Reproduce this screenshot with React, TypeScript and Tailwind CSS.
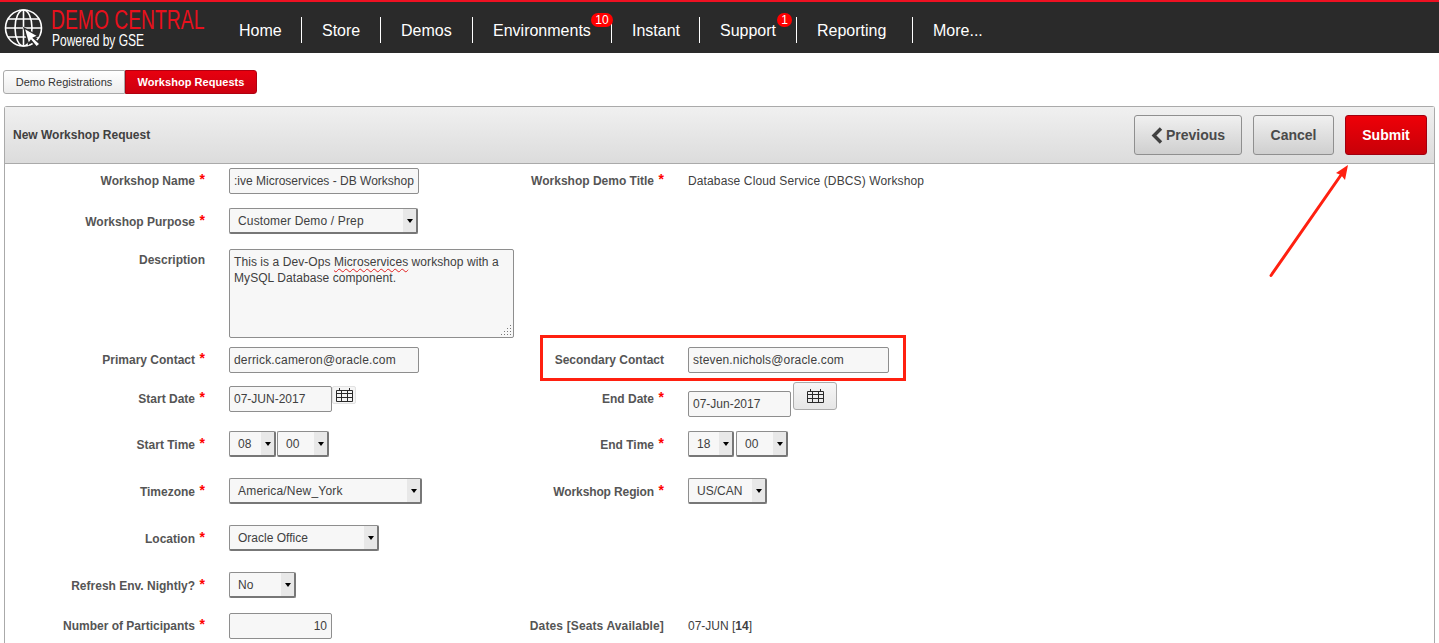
const navItems = [
  { label: "Home", width: "w-[63px]" },
  { label: "Store", width: "w-[79px]" },
  { label: "Demos", width: "w-[92px]" },
  { label: "Environments", width: "w-[139px]", badge: "10", badgePos: "right-[-2px] w-[22px]" },
  { label: "Instant", width: "w-[88px]" },
  { label: "Support", width: "w-[97px]", badge: "1", badgePos: "right-[4px] w-[15px]" },
  { label: "Reporting", width: "w-[116px]" },
  { label: "More...", width: "w-auto" },
];

function Logo() {
  return (
    <svg width="46" height="46" viewBox="0 0 46 46" fill="none" stroke="#fff" strokeWidth="1.6" className="shrink-0">
      <circle cx="21.5" cy="20" r="18" />
      <ellipse cx="21.5" cy="20" rx="8.5" ry="18" />
      <path d="M21.5 2v36M6 11h31M3.5 20h36M6 29h31" />
      <path d="M22 20 L36 28 L31.5 30 L38 36 L34.5 39 L29 32.5 L26.5 36 Z" fill="#fff" stroke="#2a2a2a" strokeWidth="1.4" />
    </svg>
  );
}

function Label({ text, required, pad = "pt-[6px]", width = "w-[200px]", extra = "" }: { text: string; required?: boolean; pad?: string; width?: string; extra?: string }) {
  return (
    <div className={`${width} ${pad} shrink-0 flex justify-end whitespace-nowrap text-[12px] font-bold leading-[14px] text-[#555]`}>
      <span className={extra}>{text}</span>
      {required ? <span className="w-[10px] -mt-[2px] text-right text-[14px] leading-[14px] text-[#f00]">*</span> : null}
    </div>
  );
}

function TextBox({ value, width, extra = "" }: { value: string; width: string; extra?: string }) {
  return (
    <div
      className={`${width} ${extra} h-[26px] shrink-0 overflow-hidden whitespace-nowrap rounded-[2px] border border-[#8e8e8e] bg-[#f7f7f7] px-[4px] text-[12px] leading-[24px] text-[#404040]`}
    >
      {value}
    </div>
  );
}

function Select({ value, width, extra = "" }: { value: string; width: string; extra?: string }) {
  return (
    <div className={`${width} h-[26px] shrink-0 flex rounded-[2px] border border-[#8e8e8e] border-r-2 border-b-2 border-r-[#777] border-b-[#777] bg-[#f7f7f7] text-[12px] leading-[25px] text-[#404040]`}>
      <span className={`${extra} flex-1 overflow-hidden whitespace-nowrap pl-[8px]`}>{value}</span>
      <span className="flex w-[13px] shrink-0 items-center justify-center bg-[#e8e8e8]">
        <span className="border-x-[3.5px] border-t-[4px] border-x-transparent border-t-black" />
      </span>
    </div>
  );
}

function CalendarIcon() {
  return (
    <svg width="17" height="14" viewBox="0 0 17 14" fill="none" stroke="#2a2a2a" strokeWidth="1">
      <path d="M.5 2.5h16v11H.5zM.5 5.5h16M.5 9.5h16M5.5 2.5v11M11.5 2.5v11" />
      <path d="M3.5 0v2.5M13.5 0v2.5" />
    </svg>
  );
}

// one form line: left label + field, optional right label + field
function Row({ className, left, right }: { className: string; left: React.ReactNode; right?: React.ReactNode }) {
  return (
    <div className={`${className} flex items-start`}>
      <div className="flex w-[526px] shrink-0 items-start">{left}</div>
      {right ? <div className="flex items-start">{right}</div> : null}
    </div>
  );
}

const leftGap = <div className="w-[24px] shrink-0" />;
const rightLabelWidth = "w-[133px]";

export default function App() {
  return (
    <div className="relative h-[643px] w-[1439px] overflow-hidden bg-white font-['Liberation_Sans',Arial,sans-serif]">
      {/* top bar */}
      <header className="flex h-[53px] border-t-2 border-[#ee1122] bg-[#2a2a2a]">
        <div className="flex w-[239px] shrink-0 items-start pl-[2px] pt-[6px]">
          <Logo />
          <div className="ml-[3px] font-['Liberation_Sans_Narrow','Liberation_Sans',sans-serif]">
            <div className="origin-left scale-x-[0.715] whitespace-nowrap text-[27px] leading-[24px] text-[#e8101c]">DEMO CENTRAL</div>
            <div className="ml-[1px] origin-left scale-x-[0.75] whitespace-nowrap text-[16px] leading-[17px] text-white">Powered by GSE</div>
          </div>
        </div>
        <nav className="flex items-start pt-[15px]">
          {navItems.map((item, i) => (
            <div
              key={item.label}
              className={`${item.width} ${i < 7 ? "border-r border-white" : ""} ${i > 0 ? "pl-[20px]" : ""} relative h-[26px] shrink-0 text-[16px] leading-[28px] text-white`}
            >
              {item.label}
              {item.badge ? (
                <span className={`${item.badgePos} absolute top-[-4px] rounded-[7px] bg-[#f00] text-center text-[12px] leading-[14px] text-white`}>
                  {item.badge}
                </span>
              ) : null}
            </div>
          ))}
        </nav>
      </header>

      {/* tabs */}
      <div className="flex pl-[3px] pt-[17px] text-[11px] leading-[22px]">
        <div className="h-[24px] w-[122px] rounded-l-[3px] border border-[#aaa] bg-linear-to-b from-white to-[#ececec] text-center text-[#333]">Demo Registrations</div>
        <div className="h-[24px] w-[132px] rounded-r-[3px] border border-[#b00010] bg-linear-to-b from-[#e8000f] to-[#cc0010] text-center font-bold tracking-[0.05px] text-white">Workshop Requests</div>
      </div>

      {/* region */}
      <section className="mx-[4px] mt-[12px] h-[537px] rounded-t-[3px] border border-b-0 border-[#aaa]">
        <div className="flex h-[57px] items-center border-b border-[#aaa] bg-linear-to-b from-[#f0f0f0] to-[#dcdcdc] pl-[8px] pr-[7px]">
          <h2 className="flex-1 pb-[1px] text-[12px] font-bold text-[#404040]">New Workshop Request</h2>
          <button className="mr-[11px] flex h-[40px] w-[108px] items-center justify-center rounded-[3px] border border-[#8f8f8f] bg-linear-to-b from-[#f0f0f0] to-[#cfcfcf] text-[14px] font-bold text-[#4a4a4a]">
            <svg width="12" height="17" viewBox="0 0 12 17" className="mr-[3px]" fill="none" stroke="#404040" strokeWidth="3.4">
              <path d="M10 1.5 3 8.5 10 15.5" />
            </svg>
            Previous
          </button>
          <button className="mr-[11px] h-[40px] w-[81px] rounded-[3px] border border-[#8f8f8f] bg-linear-to-b from-[#f0f0f0] to-[#cfcfcf] text-[14px] font-bold text-[#4a4a4a]">Cancel</button>
          <button className="h-[40px] w-[82px] rounded-[3px] border border-[#a00010] bg-linear-to-b from-[#ee0008] to-[#c80008] text-[14px] font-bold text-white">Submit</button>
        </div>

        <div className="pt-[4px]">
          <Row
            className="h-[26px]"
            left={<><Label text="Workshop Name" required />{leftGap}<TextBox value=":ive Microservices - DB Workshop" width="w-[190px]" /></>}
            right={<><Label text="Workshop Demo Title" required width={rightLabelWidth} />{leftGap}<span className="text-[12px] leading-[26px] tracking-[0.13px] text-[#404040]">Database Cloud Service (DBCS) Workshop</span></>}
          />
          <Row
            className="mt-[14px] h-[26px]"
            left={<><Label text="Workshop Purpose" required pad="pt-[7px]" />{leftGap}<Select value="Customer Demo / Prep" width="w-[189px]" extra="tracking-[0.15px]" /></>}
          />
          <Row
            className="mt-[15px] h-[89px]"
            left={
              <>
                <Label text="Description" pad="pt-[4px]" />
                {leftGap}
                <div className="relative h-[89px] w-[285px] shrink-0 rounded-[2px] border border-[#8e8e8e] bg-[#f7f7f7] px-[4px] pt-[4px] text-[12px] leading-[16px] tracking-[0.07px] text-[#404040]">
                  This is a Dev-Ops <span className="underline decoration-[#e02020] decoration-wavy decoration-1 underline-offset-2">Microservices</span> workshop with a MySQL Database component.
                  <svg width="11" height="11" viewBox="0 0 11 11" fill="#777" className="absolute bottom-[1px] right-[1px]">
                    <path d="M9 0h1v1H9zM6 3h1v1H6zM9 3h1v1H9zM3 6h1v1H3zM6 6h1v1H6zM9 6h1v1H9zM0 9h1v1H0zM3 9h1v1H3zM6 9h1v1H6zM9 9h1v1H9z" />
                  </svg>
                </div>
              </>
            }
          />
          <Row
            className="mt-[9px] h-[26px]"
            left={<><Label text="Primary Contact" required />{leftGap}<TextBox value="derrick.cameron@oracle.com" width="w-[190px]" extra="tracking-[0.19px]" /></>}
            right={<><Label text="Secondary Contact" width={rightLabelWidth} />{leftGap}<TextBox value="steven.nichols@oracle.com" width="w-[201px]" extra="tracking-[0.16px]" /></>}
          />
          <Row
            className="mt-[13px] h-[26px]"
            left={
              <>
                <Label text="Start Date" required />
                {leftGap}
                <TextBox value="07-JUN-2017" width="w-[103px]" />
                <div className="flex h-[18px] w-[24px] shrink-0 items-center justify-center rounded-[2px] border border-[#e2e2e2] bg-[#f5f5f5]">
                  <CalendarIcon />
                </div>
              </>
            }
            right={
              <>
                <Label text="End Date" required width={rightLabelWidth} />
                {leftGap}
                <TextBox value="07-Jun-2017" width="w-[103px]" extra="mt-[5px]" />
                <div className="-mt-[4px] ml-[2px] flex h-[28px] w-[44px] shrink-0 justify-center rounded-[3px] border border-[#aaa] bg-linear-to-b from-[#f6f6f6] to-[#e6e6e6] pt-[6px]">
                  <CalendarIcon />
                </div>
              </>
            }
          />
          <Row
            className="mt-[19px] h-[26px]"
            left={<><Label text="Start Time" required pad="pt-[7px]" />{leftGap}<Select value="08" width="w-[47px]" /><div className="w-[1px] shrink-0" /><Select value="00" width="w-[52px]" /></>}
            right={<><Label text="End Time" required pad="pt-[7px]" width={rightLabelWidth} />{leftGap}<Select value="18" width="w-[46px]" /><div className="w-[2px] shrink-0" /><Select value="00" width="w-[52px]" /></>}
          />
          <Row
            className="mt-[21px] h-[26px]"
            left={<><Label text="Timezone" required pad="pt-[7px]" />{leftGap}<Select value="America/New_York" width="w-[193px]" extra="tracking-[0.19px]" /></>}
            right={<><Label text="Workshop Region" required pad="pt-[7px]" width={rightLabelWidth} extra="tracking-[-0.12px]" />{leftGap}<Select value="US/CAN" width="w-[79px]" /></>}
          />
          <Row
            className="mt-[21px] h-[26px]"
            left={<><Label text="Location" required pad="pt-[7px]" />{leftGap}<Select value="Oracle Office" width="w-[150px]" /></>}
          />
          <Row
            className="mt-[21px] h-[26px]"
            left={<><Label text="Refresh Env. Nightly?" required pad="pt-[7px]" />{leftGap}<Select value="No" width="w-[67px]" /></>}
          />
          <Row
            className="mt-[15px] h-[26px]"
            left={<><Label text="Number of Participants" required />{leftGap}<TextBox value="10" width="w-[103px]" extra="text-right" /></>}
            right={
              <>
                <Label text="Dates [Seats Available]" width={rightLabelWidth} extra="tracking-[0.13px]" />
                {leftGap}
                <span className="text-[12px] leading-[26px] text-[#404040]">07-JUN [<b>14</b>]</span>
              </>
            }
          />
        </div>
      </section>

      {/* annotations drawn over the screenshot */}
      <div className="absolute left-[540px] top-[335px] h-[46px] w-[366px] border-[3px] border-[#ff2010]" />
      <svg width="100" height="125" viewBox="0 0 100 125" className="absolute left-[1260px] top-[160px]">
        <path d="M11 115.5 81 15" stroke="#ff2010" strokeWidth="3" strokeLinecap="round" />
        <polygon points="88,5 76,13 81,15 85,20" fill="#ff2010" />
      </svg>
    </div>
  );
}
